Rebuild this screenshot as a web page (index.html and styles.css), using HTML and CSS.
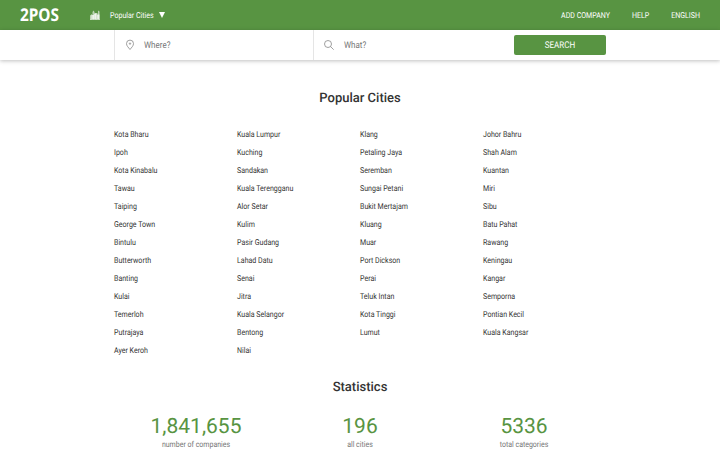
FILE: index.html
```html
<!DOCTYPE html>
<html lang="en">
<head>
<meta charset="utf-8">
<title>2POS</title>
<link rel="stylesheet" href="styles.css">
</head>
<body>
<header class="topbar">
  <a class="logo">2POS</a>
  <svg class="city-icon" viewBox="0 0 20 20"><path fill="#fff" fill-opacity=".6" d="M0 11l4-3v11H0zM5 4l2-3 2 3v15H5zM10 6h5v13h-5zM16 1l3 2v16h-3z"/><path fill="#fff" fill-opacity=".75" d="M3 10h5v9H3zM8 7h5v12H8zM14 9h5v10h-5zM0 18h20v1.500H0z"/></svg>
  <a class="popular"><span class="tall">Popular Cities</span> <span class="arrow"></span></a>
  <nav class="menu"><a class="tall">ADD COMPANY</a><a class="tall">HELP</a><a class="tall">ENGLISH</a></nav>
</header>
<form class="search">
  <div class="field where">
    <svg class="pin" viewBox="0 0 10 12"><path d="M5 10.500C3.500 8.500 1.500 6.900 1.500 4.600a3.500 3.500 0 0 1 7 0C8.500 6.900 6.500 8.500 5 10.500z"/><circle cx="5" cy="4.600" r=".7"/></svg>
    <span class="tall">Where?</span>
  </div>
  <div class="field what">
    <svg class="lens" viewBox="0 0 10 10"><circle cx="4" cy="4" r="3.500"/><path d="M6.500 6.500l3.200 3.200"/></svg>
    <span class="tall">What?</span>
  </div>
  <div class="button"><div class="tall">SEARCH</div></div>
</form>
<main>
  <h2>Popular Cities</h2>
  <div class="cities">
    <a>Kota Bharu</a><a>Kuala Lumpur</a><a>Klang</a><a>Johor Bahru</a>
    <a>Ipoh</a><a>Kuching</a><a>Petaling Jaya</a><a>Shah Alam</a>
    <a>Kota Kinabalu</a><a>Sandakan</a><a>Seremban</a><a>Kuantan</a>
    <a>Tawau</a><a>Kuala Terengganu</a><a>Sungai Petani</a><a>Miri</a>
    <a>Taiping</a><a>Alor Setar</a><a>Bukit Mertajam</a><a>Sibu</a>
    <a>George Town</a><a>Kulim</a><a>Kluang</a><a>Batu Pahat</a>
    <a>Bintulu</a><a>Pasir Gudang</a><a>Muar</a><a>Rawang</a>
    <a>Butterworth</a><a>Lahad Datu</a><a>Port Dickson</a><a>Keningau</a>
    <a>Banting</a><a>Senai</a><a>Perai</a><a>Kangar</a>
    <a>Kulai</a><a>Jitra</a><a>Teluk Intan</a><a>Semporna</a>
    <a>Temerloh</a><a>Kuala Selangor</a><a>Kota Tinggi</a><a>Pontian Kecil</a>
    <a>Putrajaya</a><a>Bentong</a><a>Lumut</a><a>Kuala Kangsar</a>
    <a>Ayer Keroh</a><a>Nilai</a>
  </div>
  <h2>Statistics</h2>
  <div class="stats">
    <div><strong>1,841,655</strong><span>number of companies</span></div>
    <div><strong>196</strong><span>all cities</span></div>
    <div><strong>5336</strong><span>total categories</span></div>
  </div>
</main>
</body>
</html>
```
FILE: styles.css
```css
* { box-sizing: border-box; }
body { margin: 0; height: 450px; overflow: hidden; background: #fff; color: #333; font: 7.05px/18px Roboto, sans-serif; text-rendering: geometricPrecision; }
.topbar { display: flex; align-items: center; height: 30px; padding: 0 20px; background: #589442; color: #fff; }
.logo { width: 70px; font: 700 17.5px/30px "Noto Sans", sans-serif; transform: scaleX(.88); transform-origin: 0 50%; }
.city-icon { width: 10px; height: 10px; margin-right: 10px; }
.popular { display: flex; align-items: center; }
.tall, .cities a, .stats span { transform: translateY(.2px) scaleY(1.16); }
.arrow { margin-left: 5px; border: 3px solid transparent; border-top: 6px solid #fff; border-bottom: 0; }
.menu { display: flex; gap: 22px; margin-left: auto; }
.search { display: flex; align-items: center; height: 30px; padding-left: 114px; box-shadow: 0 1px 4px rgba(0, 0, 0, .25); color: #757575; font-size: 8px; }
.field { display: flex; align-items: center; height: 30px; border-left: 1px solid #e5e5e5; }
.where { width: 199px; padding-left: 10px; }
.what { width: 201px; padding-left: 10px; }
.field svg { fill: none; stroke: #888; stroke-width: .8; }
.pin { width: 10px; height: 12px; margin-right: 9px; }
.lens { width: 10px; height: 10px; margin-right: 10px; }
.button { width: 92px; height: 20px; border-radius: 2px; background: #589442; color: #fff; line-height: 20px; text-align: center; }
main { width: 492px; margin: 0 auto; }
h2 { margin: 0; padding-top: 29px; font-size: 13px; font-weight: 500; line-height: 19px; text-align: center; }
.cities { display: grid; grid-template-columns: repeat(4, 123px); grid-auto-rows: 18px; margin-top: 17px; }
.cities + h2 { padding-top: 19px; }
.stats { display: flex; padding-top: 17px; text-align: center; }
.stats div { flex: 1; }
.stats strong { display: block; color: #589442; font-size: 21px; font-weight: 400; line-height: 26px; }
.stats span { display: block; color: #757575; font-size: 7px; line-height: 11px; }
```
